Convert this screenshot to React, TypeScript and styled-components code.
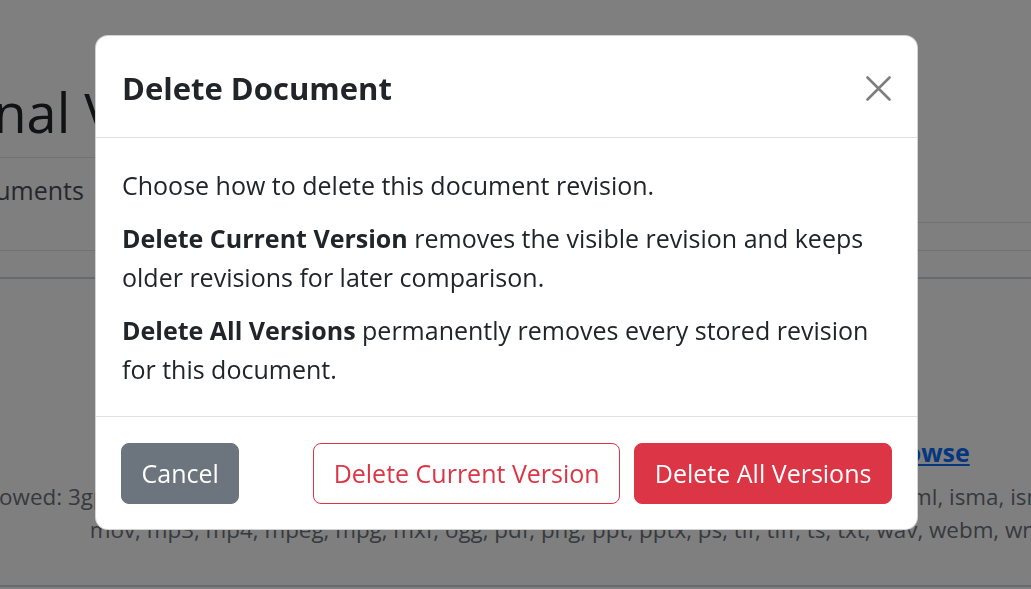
import React from 'react'
import styled, { createGlobalStyle } from 'styled-components'
import { Upload } from 'lucide-react'

const GlobalStyle = createGlobalStyle`
  * { box-sizing: border-box; }
  html, body {
    margin: 0;
    overflow: hidden;
    background: #fff;
  }
  body {
    font-family: 'Open Sans', 'Segoe UI', sans-serif;
    color: #212529;
  }
`

/* page behind the modal */
const Page = styled.div`
  width: 1298px;
  margin-left: -77px;
  padding-top: 80px;
  font-size: 25px;
  line-height: 38.4px;
`
const PageTitle = styled.h1`
  margin: 0 0 12px 29px;
  font-size: 54px;
  font-weight: 500;
  line-height: 1.2;
`
const Tabs = styled.div`
  display: flex;
  border-bottom: 1px solid #dee2e6;
`
const Tab = styled.div<{ $active?: boolean }>`
  padding: 13px 26px;
  margin-bottom: -1px;
  border: 1px solid transparent;
  border-radius: 6px 6px 0 0;
  color: ${(p) => (p.$active ? '#495057' : '#0d6efd')};
  background: ${(p) => (p.$active ? '#fff' : 'transparent')};
  border-color: ${(p) => (p.$active ? '#dee2e6 #dee2e6 #fff' : 'transparent')};
`
const Toolbar = styled.div`
  height: 28px;
  border-bottom: 1px solid #dee2e6;
`
const Dropzone = styled.div`
  margin-top: 26px;
  height: 310px;
  border: 2px solid #ced4da;
  display: flex;
  flex-direction: column;
  align-items: center;
  padding-top: 50px;
`
const DropIcon = styled.div`
  height: 64px;
  margin-bottom: 40px;
  color: #adb5bd;
`
const DropPrompt = styled.div`
  white-space: nowrap;
  color: #212529;
  margin-bottom: 8px;
`
const AllowedLine = styled.div`
  white-space: nowrap;
  font-size: 22.4px;
  line-height: 33.6px;
  color: #6c757d;
`
const BrowseLink = styled.a`
  color: #0d6efd;
  font-weight: 700;
  text-decoration: underline;
`

/* modal */
const Backdrop = styled.div`
  position: fixed;
  inset: 0;
  background: rgba(0, 0, 0, 0.5);
`
const ModalLayer = styled.div`
  position: fixed;
  inset: 0;
  display: flex;
  justify-content: center;
  align-items: flex-start;
  padding: 35px 18px 0 0;
`
const Dialog = styled.div`
  width: 823px;
  background: #fff;
  border: 1px solid rgba(0, 0, 0, 0.175);
  border-radius: 13px;
  font-size: 25px;
  line-height: 38.4px;
  color: #212529;
`
const Header = styled.div`
  display: flex;
  align-items: center;
  justify-content: space-between;
  padding: 29px 26px 26px;
  border-bottom: 1px solid #dee2e6;
`
const Heading = styled.h5`
  margin: 0;
  font-size: 31px;
  line-height: 46px;
  font-weight: 700;
`
const CloseButton = styled.button`
  display: flex;
  width: 25px;
  height: 25px;
  padding: 0;
  border: 0;
  background: none;
  opacity: 0.5;
  cursor: pointer;
`
const Body = styled.div`
  padding: 28px 26px;
`
const Paragraph = styled.p`
  margin: 0 0 15px;
  &:last-child {
    margin-bottom: 0;
  }
`
const Footer = styled.div`
  display: flex;
  align-items: center;
  gap: 14px;
  padding: 26px 25px 25px;
  border-top: 1px solid #dee2e6;
`

type Variant = 'secondary' | 'outline-danger' | 'danger'

const variants: Record<Variant, { bg: string; fg: string; border: string }> = {
  secondary: { bg: '#6c757d', fg: '#fff', border: '#6c757d' },
  'outline-danger': { bg: '#fff', fg: '#dc3545', border: '#dc3545' },
  danger: { bg: '#dc3545', fg: '#fff', border: '#dc3545' },
}

const Button = styled.button<{ $variant: Variant; $pushRight?: boolean }>`
  font: inherit;
  font-size: 25px;
  line-height: 38.4px;
  padding: 10.3px 19.6px;
  border: 1px solid ${(p) => variants[p.$variant].border};
  border-radius: 8px;
  background: ${(p) => variants[p.$variant].bg};
  color: ${(p) => variants[p.$variant].fg};
  margin-right: ${(p) => (p.$pushRight ? 'auto' : '0')};
  cursor: pointer;
`

const CloseIcon = () => (
  <svg width="25" height="25" viewBox="0 0 25 25" fill="none">
    <path
      d="M1.5 1.5L23.5 23.5M23.5 1.5L1.5 23.5"
      stroke="#000"
      strokeWidth="2.6"
      strokeLinecap="round"
    />
  </svg>
)

export default function App() {
  return (
    <>
      <GlobalStyle />
      <Page>
        <PageTitle>Final Versions</PageTitle>
        <Tabs>
          <Tab $active>Documents</Tab>
          <Tab>Revisions</Tab>
          <Tab>History</Tab>
        </Tabs>
        <Toolbar />
        <Dropzone>
          <DropIcon>
            <Upload size={64} strokeWidth={1.5} />
          </DropIcon>
          <DropPrompt>
            Drag and drop your files here to upload a newer revision, or{' '}
            <BrowseLink href="#">Browse</BrowseLink>
          </DropPrompt>
          <AllowedLine>
            Files allowed: 3gp, 3g2, 7z, ai, avi, bmp, csv, doc, docm, docx, eml, epub, flv, gif,
            gz, heic, htm, html, isma, ismv, jpeg, jpg, m4a,
          </AllowedLine>
          <AllowedLine>
            mov, mp3, mp4, mpeg, mpg, mxf, ogg, pdf, png, ppt, pptx, ps, tif, tiff, ts, txt, wav,
            webm, wmv
          </AllowedLine>
        </Dropzone>
      </Page>

      <Backdrop />
      <ModalLayer>
        <Dialog role="dialog" aria-modal="true">
          <Header>
            <Heading>Delete Document</Heading>
            <CloseButton aria-label="Close">
              <CloseIcon />
            </CloseButton>
          </Header>
          <Body>
            <Paragraph>Choose how to delete this document revision.</Paragraph>
            <Paragraph>
              <strong>Delete Current Version</strong> removes the visible revision and keeps
              older revisions for later comparison.
            </Paragraph>
            <Paragraph>
              <strong>Delete All Versions</strong> permanently removes every stored revision
              for this document.
            </Paragraph>
          </Body>
          <Footer>
            <Button $variant="secondary" $pushRight>
              Cancel
            </Button>
            <Button $variant="outline-danger">Delete Current Version</Button>
            <Button $variant="danger">Delete All Versions</Button>
          </Footer>
        </Dialog>
      </ModalLayer>
    </>
  )
}
